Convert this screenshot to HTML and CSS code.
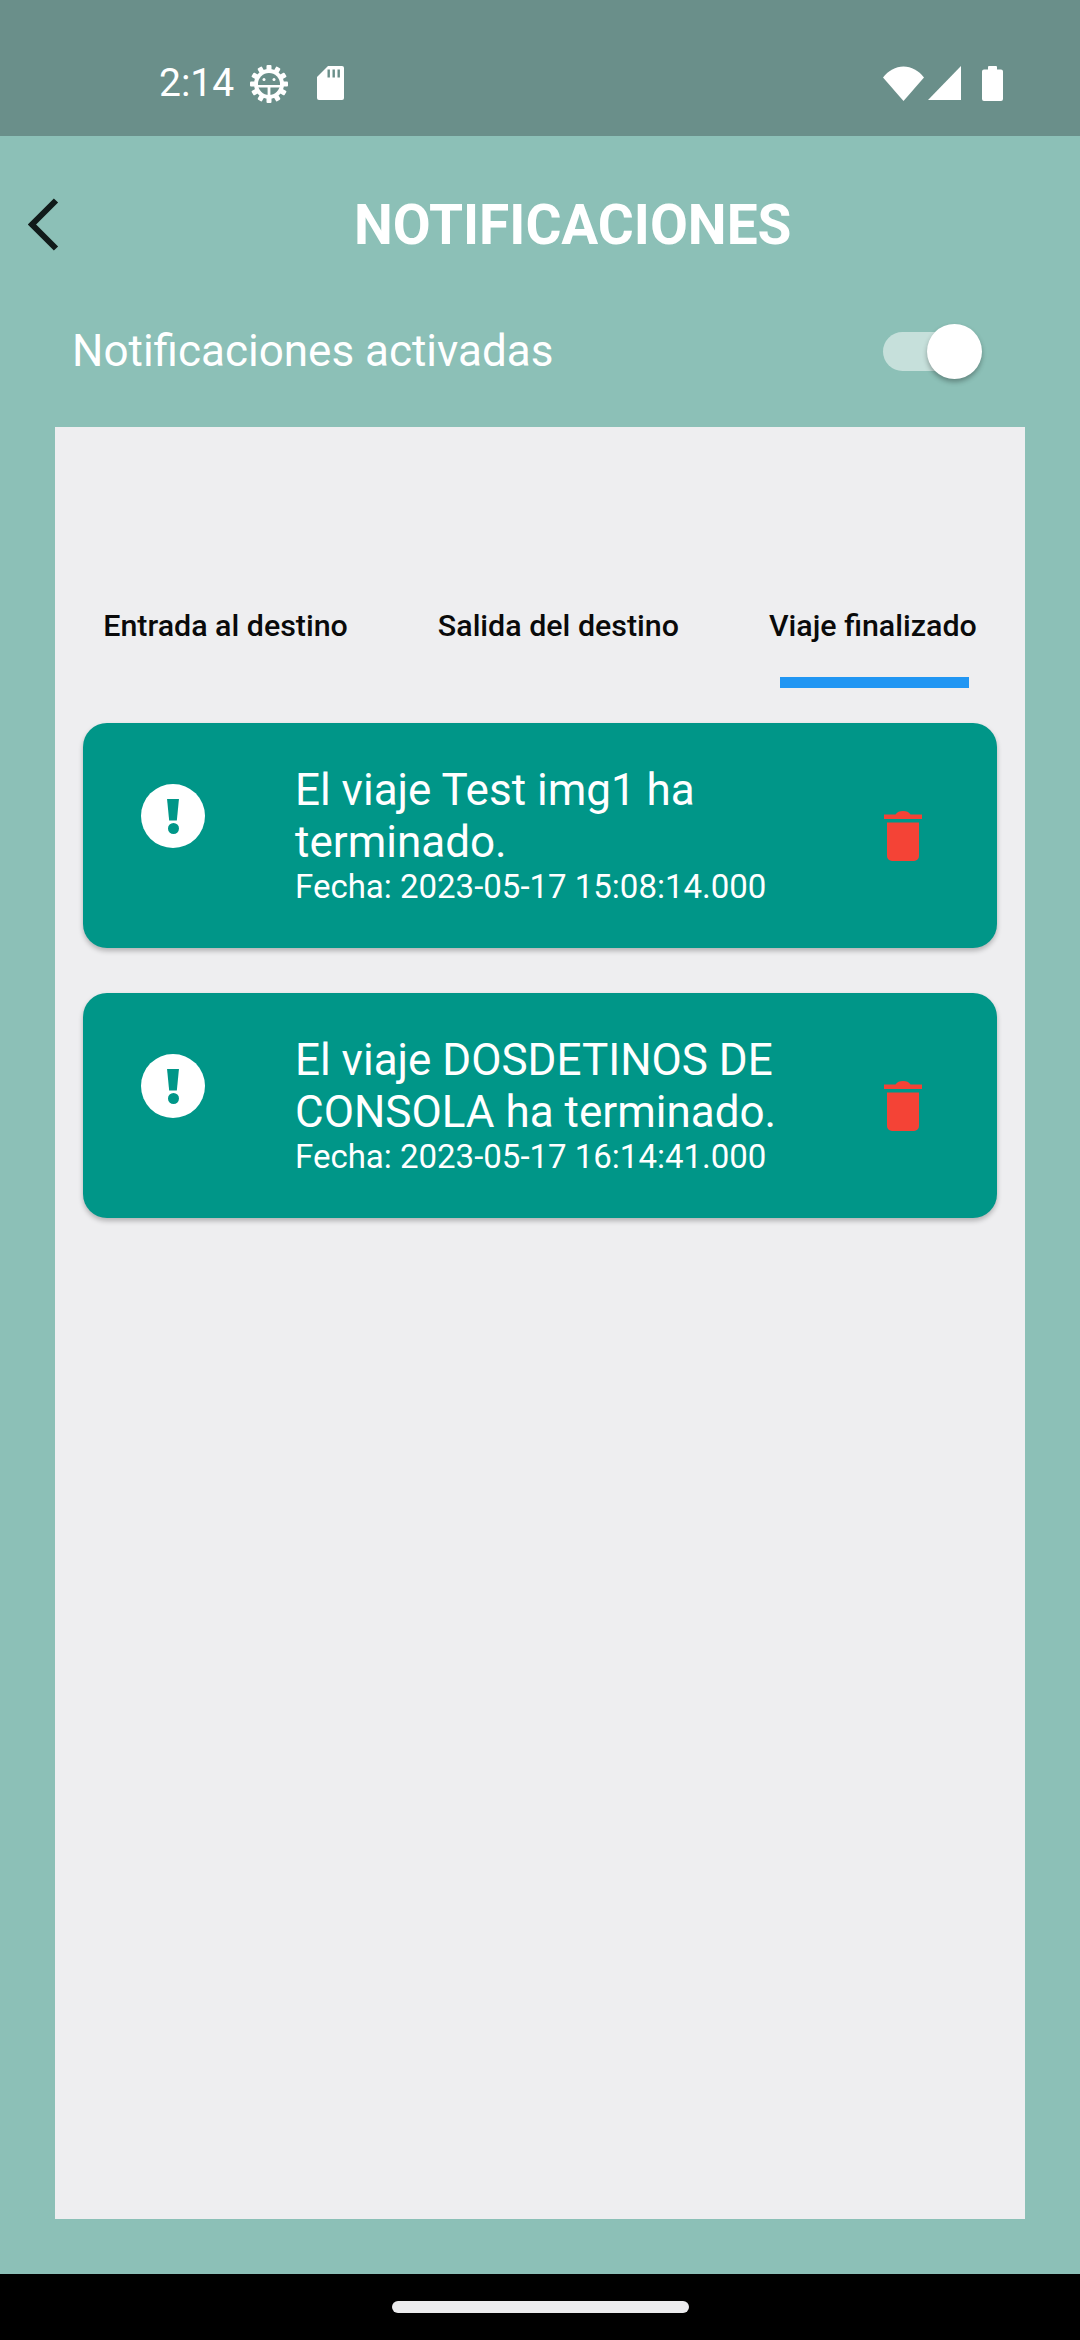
FILE: index.html
```html
<!DOCTYPE html>
<html lang="es">

<head>
    <meta charset="UTF-8">
    <meta name="viewport" content="width=device-width, initial-scale=1.0">
    <title>Notificaciones</title>
    <link rel="stylesheet" href="styles.css">
</head>

<body>
    <div class="status-bar">
        <div class="status-left">
            <span class="status-time">2:14</span>
            <svg class="icon-gear" viewBox="0 0 38 38">
                <g fill="#fff">
                    <rect x="16.500" y="0" width="5" height="38" rx="1"/>
                    <rect x="16.500" y="0" width="5" height="38" rx="1" transform="rotate(30 19 19)"/>
                    <rect x="16.500" y="0" width="5" height="38" rx="1" transform="rotate(60 19 19)"/>
                    <rect x="16.500" y="0" width="5" height="38" rx="1" transform="rotate(90 19 19)"/>
                    <rect x="16.500" y="0" width="5" height="38" rx="1" transform="rotate(120 19 19)"/>
                    <rect x="16.500" y="0" width="5" height="38" rx="1" transform="rotate(150 19 19)"/>
                </g>
                <circle cx="19" cy="19" r="15" fill="#fff"/>
                <circle cx="19" cy="19" r="11" fill="#6a8f8a"/>
                <path d="M8 20h22v2.600h-9.600V31h-2.800v-8.400H8z" fill="#fff"/>
                <circle cx="14" cy="14.500" r="1.500" fill="#fff"/>
                <circle cx="24" cy="14.500" r="1.500" fill="#fff"/>
            </svg>
            <svg class="icon-sd" viewBox="0 0 27 34">
                <path d="M11 0h14a2 2 0 0 1 2 2v30a2 2 0 0 1-2 2H2a2 2 0 0 1-2-2V11z" fill="#fff"/>
                <path d="M10.500 3.500h2.400v8h-2.400zM15.500 3.500h2.400v8h-2.400zM20.500 3.500h2.400v8h-2.400z" fill="#6a8f8a"/>
            </svg>
        </div>
        <div class="status-right">
            <svg class="icon-wifi" viewBox="0 0 41 35">
                <path d="M20.500 35L0 11.500C5.500 4.500 12.500 0.500 20.500 0.500S35.500 4.500 41 11.500z" fill="#fff"/>
            </svg>
            <svg class="icon-signal" viewBox="0 0 33 34">
                <path d="M33 0v34H0z" fill="#fff"/>
            </svg>
            <svg class="icon-battery" viewBox="0 0 21 35">
                <path d="M7 0h7a1 1 0 0 1 1 1v2.500h4a2 2 0 0 1 2 2V33a2 2 0 0 1-2 2H2a2 2 0 0 1-2-2V5.500a2 2 0 0 1 2-2h4V1a1 1 0 0 1 1-1z" fill="#fff"/>
            </svg>
        </div>
    </div>

    <div class="app">
        <header class="app-header">
            <svg class="icon-back" viewBox="0 0 31 53">
                <path d="M28 2.500L4 26.500l24 24" fill="none" stroke="#111b1a" stroke-width="6"/>
            </svg>
            <h1 class="app-title">NOTIFICACIONES</h1>
        </header>

        <div class="toggle-row">
            <span class="toggle-label">Notificaciones activadas</span>
            <div class="switch">
                <div class="switch-thumb"></div>
            </div>
        </div>

        <main class="panel">
            <nav class="tabs">
                <div class="tab">Entrada al destino</div>
                <div class="tab">Salida del destino</div>
                <div class="tab tab-active">Viaje finalizado</div>
            </nav>

            <section class="card">
                <div class="alert-icon"><span class="alert-bar"></span><span class="alert-dot"></span></div>
                <div class="card-text">
                    <div class="card-title">El viaje Test img1 ha terminado.</div>
                    <div class="card-date">Fecha: 2023-05-17 15:08:14.000</div>
                </div>
                <svg class="icon-trash" viewBox="0 0 38 50">
                    <path d="M0 3.500h11.500C13 1 15.500 0 19 0s6 1 7.500 3.500H38V8H0zM3 11.500h32V45a5 5 0 0 1-5 5H8a5 5 0 0 1-5-5z" fill="#f44336"/>
                </svg>
            </section>

            <section class="card">
                <div class="alert-icon"><span class="alert-bar"></span><span class="alert-dot"></span></div>
                <div class="card-text">
                    <div class="card-title">El viaje DOSDETINOS DE CONSOLA ha terminado.</div>
                    <div class="card-date">Fecha: 2023-05-17 16:14:41.000</div>
                </div>
                <svg class="icon-trash" viewBox="0 0 38 50">
                    <path d="M0 3.500h11.500C13 1 15.500 0 19 0s6 1 7.500 3.500H38V8H0zM3 11.500h32V45a5 5 0 0 1-5 5H8a5 5 0 0 1-5-5z" fill="#f44336"/>
                </svg>
            </section>
        </main>
    </div>

    <div class="nav-bar">
        <div class="home-pill"></div>
    </div>
</body>

</html>
```

FILE: styles.css
```css
* {
    box-sizing: border-box;
}

html,
body {
    margin: 0;
    padding: 0;
}

body {
    width: 1080px;
    height: 2340px;
    display: flex;
    flex-direction: column;
    font-family: Roboto, "Liberation Sans", sans-serif;
    background-color: #8cc0b7;
    overflow: hidden;
}

.status-bar {
    height: 136px;
    flex-shrink: 0;
    background-color: #6a8f8a;
    display: flex;
    justify-content: space-between;
    align-items: center;
    padding: 30px 77px 0 159px;
    color: #fff;
}

.status-left {
    display: flex;
    align-items: center;
}

.status-time {
    font-size: 39px;
    line-height: 44px;
    width: 91px;
}

.icon-gear {
    width: 38px;
    height: 38px;
    margin-top: 1px;
}

.icon-sd {
    width: 27px;
    height: 34px;
    margin-left: 29px;
}

.status-right {
    display: flex;
    align-items: center;
}

.icon-wifi {
    width: 41px;
    height: 35px;
}

.icon-signal {
    width: 33px;
    height: 34px;
    margin-left: 4px;
}

.icon-battery {
    width: 21px;
    height: 35px;
    margin-left: 21px;
}

.app {
    flex: 1;
    display: flex;
    flex-direction: column;
    padding: 0 55px 55px;
}

.app-header {
    height: 176px;
    margin-left: -55px;
    padding-left: 28px;
    display: flex;
    align-items: center;
}

.icon-back {
    width: 31px;
    height: 53px;
    flex-shrink: 0;
}

.app-title {
    margin: 2px 0 0 295px;
    font-size: 55px;
    font-weight: 700;
    color: #fff;
}

.toggle-row {
    height: 70px;
    margin-top: 4px;
    margin-bottom: 41px;
    padding: 0 47px 0 17px;
    display: flex;
    justify-content: space-between;
    align-items: center;
    color: #fff;
}

.toggle-label {
    font-size: 44px;
}

.switch {
    position: relative;
    width: 78px;
    height: 39px;
    border-radius: 20px;
    background-color: rgba(255, 255, 255, 0.5);
    margin-right: 17px;
}

.switch-thumb {
    position: absolute;
    top: -8px;
    right: -21px;
    width: 55px;
    height: 55px;
    border-radius: 50%;
    background-color: #fff;
    box-shadow: 0 3px 5px rgba(0, 0, 0, 0.3);
}

.panel {
    flex: 1;
    background-color: #eeeef0;
    padding: 0 28px;
}

.tabs {
    height: 296px;
    display: flex;
    justify-content: center;
    gap: 70px;
    padding-top: 178px;
}

.tab {
    position: relative;
    padding: 0 10px;
    height: 42px;
    font-size: 30.4px;
    line-height: 42px;
    font-weight: 500;
    color: #0a0a0a;
    white-space: nowrap;
}

.tab-active::after {
    content: "";
    position: absolute;
    left: 21px;
    right: 18px;
    top: 72px;
    height: 11px;
    background-color: #2196f3;
}

.card {
    height: 225px;
    margin-bottom: 45px;
    background-color: #009688;
    border-radius: 24px;
    box-shadow: 0 3px 5px rgba(0, 0, 0, 0.25);
    display: flex;
    align-items: flex-start;
    color: #fff;
    padding: 0 75px 0 58px;
}

.alert-icon {
    width: 64px;
    height: 64px;
    margin-top: 61px;
    border-radius: 50%;
    background-color: #fff;
    display: flex;
    flex-direction: column;
    align-items: center;
    justify-content: center;
    gap: 2px;
    flex-shrink: 0;
}

.alert-bar {
    width: 12px;
    height: 22px;
    clip-path: polygon(0 0, 100% 0, 82% 100%, 18% 100%);
    background-color: #009688;
}

.alert-dot {
    width: 11px;
    height: 11px;
    border-radius: 50%;
    background-color: #009688;
}

.card-text {
    flex: 1;
    margin-left: 90px;
    padding-top: 41px;
}

.card-title {
    font-size: 44px;
    line-height: 52px;
    width: 520px;
}

.card-date {
    font-size: 33px;
    line-height: 36px;
    margin-top: 1px;
}

.icon-trash {
    width: 38px;
    height: 50px;
    margin-top: 88px;
    flex-shrink: 0;
}

.nav-bar {
    height: 66px;
    flex-shrink: 0;
    background-color: #000;
    display: flex;
    justify-content: center;
    padding-top: 27px;
}

.home-pill {
    width: 297px;
    height: 12px;
    border-radius: 6px;
    background-color: #ececee;
}
```
